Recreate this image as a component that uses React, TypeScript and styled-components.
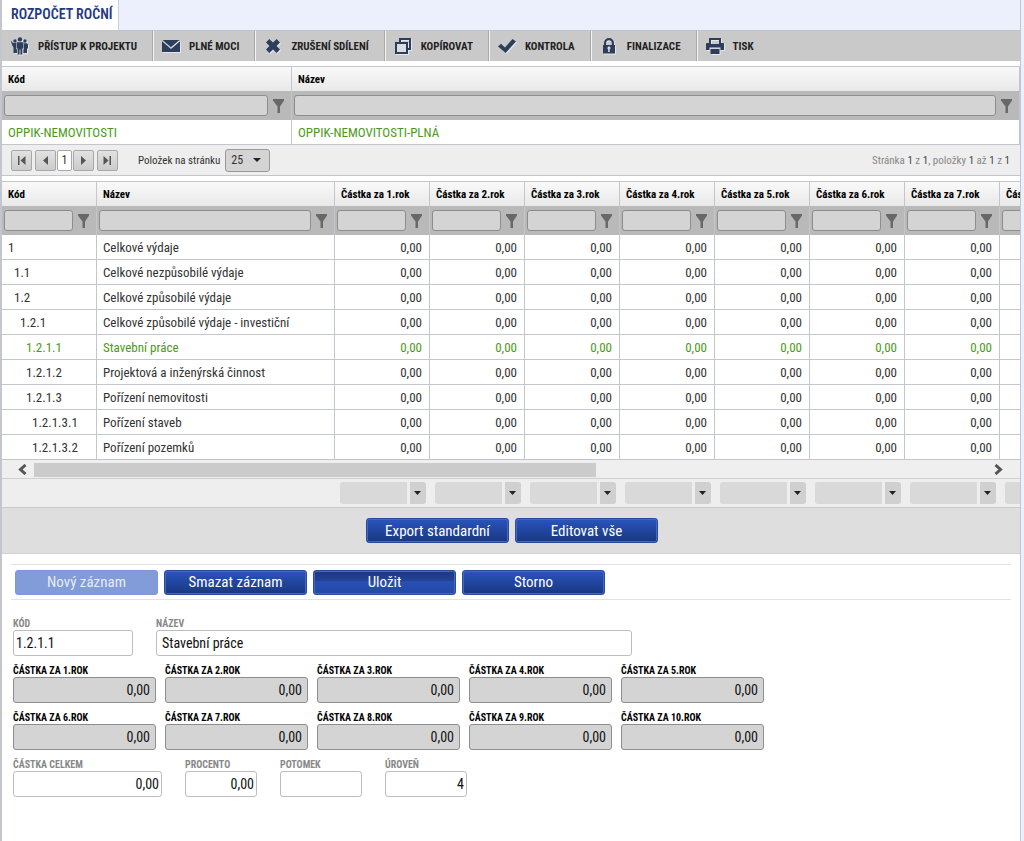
import React from "react";
import styled, { createGlobalStyle, css } from "styled-components";

const GlobalStyle = createGlobalStyle`
  *, *::before, *::after { box-sizing: border-box; }
  body {
    margin: 0;
    background: #ecf0fc;
    color: #333;
    font-family: "Roboto Condensed", "Liberation Sans Narrow", Roboto, sans-serif;
    font-size: 13px;
  }
  button, input, select { font: inherit; color: inherit; margin: 0; }
`;

const Page = styled.div`
  display: flex;
  flex-direction: column;
  min-height: 100vh;
  padding-right: 3px;
`;

const Frame = styled.main`
  flex: 1;
  display: flex;
  flex-direction: column;
  border: solid #c3c6cb;
  border-width: 0 1px 0 2px;
  background: #fff;
  min-width: 0;
`;

const TabStrip = styled.nav`
  display: flex;
  height: 30px;
  background: #ecf0fc;
`;

const Tab = styled.a`
  display: flex;
  align-items: center;
  padding: 0 5px 2px 9px;
  border-right: 1px solid #ccd0da;
  background: #fff;
  color: #1f3a83;
  font-size: 14px;
  font-weight: 600;
  text-decoration: none;
`;

const Toolbar = styled.div`
  display: flex;
  height: 31px;
  padding-left: 1px;
  border-top: 1px solid #bfc3cc;
  background: #c9c9c9;
`;

const Tool = styled.button`
  display: flex;
  align-items: center;
  gap: 8px;
  padding: 0 15px 0 7px;
  border: 0;
  border-right: 1px solid #a9a9a9;
  box-shadow: 1px 0 #f4f4f4;
  margin-right: 1px;
  background: none;
  color: #222;
  font-size: 11px;
  font-weight: 700;
  white-space: nowrap;
  &:last-child {
    border-right: 0;
    box-shadow: none;
  }
`;

const ToolIcon = styled.svg`
  width: 20px;
  height: 18px;
  fill: #2c3e5c;
  filter: drop-shadow(1px 1px 0 #e4e6ea);
`;

const Panel = styled.section`
  margin-top: 5px;
  border-top: 1px solid #c3c6cb;
`;

const GridViewport = styled.div`
  overflow: hidden;
`;

const Grid = styled.table<{ $width?: number }>`
  width: ${(p) => (p.$width ? `${p.$width}px` : "100%")};
  table-layout: fixed;
  border-collapse: separate;
  border-spacing: 0;
`;

const Column = styled.col<{ $width?: number }>`
  width: ${(p) => (p.$width ? `${p.$width}px` : "auto")};
`;

const HeadCell = styled.th`
  height: 24px;
  padding: 0 6px 0 6px;
  border-right: 1px solid #c3c6cb;
  background: linear-gradient(#f9f9f9, #e9e9e9);
  color: #000;
  font-size: 11px;
  font-weight: 700;
  text-align: left;
  white-space: nowrap;
`;

const FilterCell = styled.td`
  height: 29px;
  padding: 0;
  border-right: 1px solid #c3c6cb;
  background: #b9b9b9;
`;

const FilterBox = styled.div`
  display: flex;
  align-items: center;
  gap: 5px;
  padding: 0 7px 0 2px;
`;

const FilterInput = styled.input`
  flex: 1;
  min-width: 0;
  height: 21px;
  padding: 0 4px;
  border: 1px solid #8d8d8d;
  border-radius: 3px;
  background: #d4d4d4;
`;

const FilterButton = styled.button`
  display: flex;
  padding: 0;
  border: 0;
  background: none;
  svg {
    width: 11px;
    height: 14px;
    fill: #686868;
  }
`;

const Cell = styled.td<{ $level?: number; $numeric?: boolean; $active?: boolean }>`
  height: 25px;
  padding: 0 7px 0 ${(p) => 6 + (p.$level ?? 0) * 6}px;
  border: solid #c3c6cb;
  border-width: 0 1px 1px 0;
  color: ${(p) => (p.$active ? "#4c9a1b" : "#333")};
  text-align: ${(p) => (p.$numeric ? "right" : "left")};
  white-space: nowrap;
`;

const Pager = styled.div`
  display: flex;
  align-items: center;
  height: 31px;
  padding: 0 10px 0 9px;
  border-bottom: 1px solid #c3c6cb;
  background: #eeeeee;
  font-size: 11px;
`;

const pagerBox = css`
  display: flex;
  align-items: center;
  justify-content: center;
  height: 21px;
  padding: 0;
  border: 1px solid #a8a8a8;
  border-radius: 2px;
`;

const PagerButton = styled.button`
  ${pagerBox}
  width: 21px;
  background: linear-gradient(#e2e2e2, #cbcbcb);
  svg {
    width: 9px;
    height: 9px;
    fill: #555;
  }
`;

const CurrentPage = styled.button`
  ${pagerBox}
  width: 15px;
  background: #fff;
  font-size: 12px;
`;

const PagerGroup = styled.div<{ $gap: number }>`
  display: flex;
  align-items: center;
  gap: ${(p) => p.$gap}px;
`;

const SizeLabel = styled.label`
  display: flex;
  align-items: center;
  gap: 5px;
  margin-left: 20px;
`;

const SelectWrap = styled.span`
  position: relative;
  display: block;
`;

const SizeSelect = styled.select`
  display: block;
  appearance: none;
  width: 45px;
  height: 23px;
  padding: 0 0 0 5px;
  border: 1px solid #999;
  border-radius: 3px;
  background: #d4d4d4;
  font-size: 12px;
`;

const SelectArrow = styled.svg<{ $right: number; $size: number }>`
  position: absolute;
  top: 50%;
  right: ${(p) => p.$right}px;
  width: ${(p) => p.$size}px;
  height: 4px;
  margin-top: -2px;
  fill: #222;
  pointer-events: none;
`;

const PagerInfo = styled.span`
  margin-left: auto;
  color: #888;
  b {
    color: #444;
    font-weight: 400;
  }
`;

const ScrollBar = styled.div`
  display: flex;
  align-items: center;
  height: 19px;
  padding: 1px 12px 0 10px;
  border-bottom: 1px solid #cfcfcf;
  background: #efefef;
`;

const ScrollArrow = styled.button`
  display: flex;
  justify-content: center;
  width: 20px;
  padding: 0;
  border: 0;
  background: none;
  svg {
    width: 9px;
    height: 11px;
    fill: none;
    stroke: #555;
    stroke-width: 3;
  }
`;

const ScrollTrack = styled.div`
  flex: 1;
  height: 14px;
  margin: 0 2px;
`;

const ScrollThumb = styled.div`
  width: 59%;
  height: 100%;
  background: #cbcbcb;
`;

const Totals = styled.div`
  display: flex;
  overflow: hidden;
  height: 29px;
  align-items: center;
  padding-left: 338px;
  gap: 9px;
  border-bottom: 1px solid #c9c9c9;
  background: #eeeeee;
`;

const TotalSelect = styled.select`
  display: block;
  appearance: none;
  width: 86px;
  height: 22px;
  padding: 0 20px 0 4px;
  border: 0;
  border-radius: 3px;
  background: linear-gradient(90deg, #d9d9d9 67px, #eeeeee 67px, #eeeeee 70px, #d0d0d0 70px);
`;

const ActionBar = styled.div`
  display: flex;
  justify-content: center;
  align-items: center;
  gap: 6px;
  height: 46px;
  padding-left: 2px;
  border-bottom: 1px solid #d2d2d2;
  background: #dedede;
`;

const RecordBar = styled.div`
  display: flex;
  align-items: center;
  gap: 6px;
  height: 36px;
  margin: 10px 9px 0;
  padding-left: 4px;
  border: solid #e3e3e3;
  border-width: 1px 0;
`;

const ActionButton = styled.button<{ $tone?: "pressed" }>`
  width: 143px;
  height: 25px;
  padding: 0;
  border: 1px solid #2a4a9c;
  border-radius: 3px;
  box-shadow: inset 0 0 0 1px #4468bd;
  background: ${(p) =>
    p.$tone === "pressed"
      ? "linear-gradient(#1b3780, #234394 42%, #2750b4 46%, #2348a6)"
      : "linear-gradient(#2a55bd, #193681)"};
  color: #fff;
  font-size: 15px;
  &:disabled {
    border-color: #7e98d6;
    box-shadow: none;
    background: #829bd9;
    color: #e6ecfa;
  }
`;

const RecordForm = styled.form`
  display: flex;
  flex-direction: column;
  gap: 8px;
  padding: 17px 11px 40px;
`;

const FormRow = styled.div<{ $gap: number }>`
  display: flex;
  flex-wrap: wrap;
  gap: 8px ${(p) => p.$gap}px;
`;

const Field = styled.label<{ $width: number; $strong?: boolean }>`
  display: flex;
  flex-direction: column;
  width: ${(p) => p.$width}px;
  color: ${(p) => (p.$strong ? "#000" : "#888")};
  font-size: 10px;
  font-weight: 700;
  line-height: 13px;
`;

const FieldInput = styled.input<{ $numeric?: boolean; $locked?: boolean; $indent?: number }>`
  width: 100%;
  height: 26px;
  padding: 0 ${(p) => (p.$locked ? 5 : 2)}px 0 ${(p) => p.$indent ?? 2}px;
  border: 1px solid ${(p) => (p.$locked ? "#8d8d8d" : "#bdbdbd")};
  border-radius: 3px;
  background: ${(p) => (p.$locked ? "#d4d4d4" : "#fff")};
  color: #111;
  font-size: 14px;
  font-weight: 400;
  text-align: ${(p) => (p.$numeric ? "right" : "left")};
`;

const tools: { label: string; icon: React.ReactNode }[] = [
  {
    label: "PŘÍSTUP K PROJEKTU",
    icon: (
      <>
        <circle cx="10" cy="2.4" r="2.2" />
        <circle cx="5" cy="4" r="1.700" />
        <circle cx="15" cy="4" r="1.700" />
        <path d="M6.600 5.200h6.800v6.300h-1.100V17.500H10.400v-5h-.8v5H7.700v-6H6.600z" />
        <path d="M1.400 3.600L2.900 6h3.200v6.200h1V16H3.500v-5.200L2.400 8.600 1.200 5.500z" />
        <path d="M13.900 6.200h2.800l1.300 1.300v4h-1V16h-3.600v-3.800h.5z" />
      </>
    ),
  },
  {
    label: "PLNÉ MOCI",
    icon: (
      <>
        <path d="M1.500 3h17L10 10.200z" />
        <path d="M1 4.300l9 7.600 9-7.600V15H1z" />
      </>
    ),
  },
  {
    label: "ZRUŠENÍ SDÍLENÍ",
    icon: <path d="M3 5.500L6.300 2 10 5.600 13.700 2 17 5.500 13.600 9l3.400 3.500-3.300 3.500L10 12.400 6.300 16 3 12.500 6.400 9z" />,
  },
  {
    label: "KOPÍROVAT",
    icon: (
      <>
        <path
          fillRule="evenodd"
          d="M6 1h12v12h-3v4H2V5h4zM8 3v2h7v6h1V3zM4 7v8h9V7z"
        />
        <path d="M4 7h9v8H4z" fill="#dcdde0" />
      </>
    ),
  },
  {
    label: "KONTROLA",
    icon: <path d="M1 9.600l3-2.800 4 3.600L15.500 2 19 4.600 8.600 16z" />,
  },
  {
    label: "FINALIZACE",
    icon: (
      <path
        fillRule="evenodd"
        d="M4 8h1V6a5 5 0 0 1 10 0v2h1v8.500H4zM7.200 8h5.600V6a2.800 2.800 0 0 0-5.600 0zM10 9.600a1.500 1.500 0 0 0-.8 2.800V15h1.600v-2.600A1.500 1.500 0 0 0 10 9.600z"
      />
    ),
  },
  {
    label: "TISK",
    icon: (
      <path
        fillRule="evenodd"
        d="M4 1h12v5h2a1 1 0 0 1 1 1v6h-3.500v-2.500h-11V13H1V7a1 1 0 0 1 1-1h2zM6 3v4h8V3zM5.500 12h9v5h-9z"
      />
    ),
  },
];

const years = [1, 2, 3, 4, 5, 6, 7, 8, 9, 10];
const gridYears = years.slice(0, 8);

const budgetRows = [
  { code: "1", level: 0, name: "Celkové výdaje" },
  { code: "1.1", level: 1, name: "Celkové nezpůsobilé výdaje" },
  { code: "1.2", level: 1, name: "Celkové způsobilé výdaje" },
  { code: "1.2.1", level: 2, name: "Celkové způsobilé výdaje - investiční" },
  { code: "1.2.1.1", level: 3, name: "Stavební práce" },
  { code: "1.2.1.2", level: 3, name: "Projektová a inženýrská činnost" },
  { code: "1.2.1.3", level: 3, name: "Pořízení nemovitosti" },
  { code: "1.2.1.3.1", level: 4, name: "Pořízení staveb" },
  { code: "1.2.1.3.2", level: 4, name: "Pořízení pozemků" },
];

const selectedCode = "1.2.1.1";

function Filter({ label }: { label: string }) {
  return (
    <FilterCell>
      <FilterBox>
        <FilterInput aria-label={`Filtr ${label}`} />
        <FilterButton type="button" aria-label={`Filtrovat ${label}`}>
          <svg viewBox="0 0 11 14">
            <path d="M0 0h11v1.500L7 7.500V14H4.500V7.500L0 1.500z" />
          </svg>
        </FilterButton>
      </FilterBox>
    </FilterCell>
  );
}

function Arrow({ right, size }: { right: number; size: number }) {
  return (
    <SelectArrow $right={right} $size={size} viewBox="0 0 8 4" preserveAspectRatio="none">
      <path d="M0 0h8L4 4z" />
    </SelectArrow>
  );
}

function ProjectGrid() {
  return (
    <Panel>
      <Grid>
        <colgroup>
          <Column $width={290} />
          <Column />
        </colgroup>
        <thead>
          <tr>
            <HeadCell>Kód</HeadCell>
            <HeadCell>Název</HeadCell>
          </tr>
        </thead>
        <tbody>
          <tr>
            <Filter label="Kód" />
            <Filter label="Název" />
          </tr>
          <tr>
            <Cell $active>OPPIK-NEMOVITOSTI</Cell>
            <Cell $active>OPPIK-NEMOVITOSTI-PLNÁ</Cell>
          </tr>
        </tbody>
      </Grid>
      <Pager>
        <PagerGroup $gap={3}>
          <PagerButton type="button" aria-label="První stránka">
            <svg viewBox="0 0 9 9"><path d="M1 0h1.500v9H1zM8.500 0v9L3.500 4.500z" /></svg>
          </PagerButton>
          <PagerGroup $gap={1}>
            <PagerButton type="button" aria-label="Předchozí stránka">
              <svg viewBox="0 0 9 9"><path d="M7 0v9L2 4.500z" /></svg>
            </PagerButton>
            <CurrentPage type="button">1</CurrentPage>
            <PagerButton type="button" aria-label="Další stránka">
              <svg viewBox="0 0 9 9"><path d="M2 0v9l5-4.500z" /></svg>
            </PagerButton>
          </PagerGroup>
          <PagerButton type="button" aria-label="Poslední stránka">
            <svg viewBox="0 0 9 9"><path d="M6.500 0H8v9H6.500zM.5 0v9l5-4.500z" /></svg>
          </PagerButton>
        </PagerGroup>
        <SizeLabel>
          Položek na stránku
          <SelectWrap>
            <SizeSelect defaultValue="25">
              <option>25</option>
              <option>50</option>
            </SizeSelect>
            <Arrow right={9} size={8} />
          </SelectWrap>
        </SizeLabel>
        <PagerInfo>
          Stránka <b>1</b> z <b>1</b>, položky <b>1</b> až <b>1</b> z <b>1</b>
        </PagerInfo>
      </Pager>
    </Panel>
  );
}

function BudgetGrid() {
  return (
    <Panel>
      <GridViewport>
        <Grid $width={1093}>
          <colgroup>
            <Column $width={95} />
            <Column $width={238} />
            {gridYears.map((y) => (
              <Column key={y} $width={95} />
            ))}
          </colgroup>
          <thead>
            <tr>
              <HeadCell>Kód</HeadCell>
              <HeadCell>Název</HeadCell>
              {gridYears.map((y) => (
                <HeadCell key={y}>{`Částka za ${y}.rok`}</HeadCell>
              ))}
            </tr>
          </thead>
          <tbody>
            <tr>
              <Filter label="Kód" />
              <Filter label="Název" />
              {gridYears.map((y) => (
                <Filter key={y} label={`Částka za ${y}.rok`} />
              ))}
            </tr>
            {budgetRows.map((row) => {
              const active = row.code === selectedCode;
              return (
                <tr key={row.code}>
                  <Cell $level={row.level} $active={active}>{row.code}</Cell>
                  <Cell $active={active}>{row.name}</Cell>
                  {gridYears.map((y) => (
                    <Cell key={y} $numeric $active={active}>0,00</Cell>
                  ))}
                </tr>
              );
            })}
          </tbody>
        </Grid>
      </GridViewport>
      <ScrollBar>
        <ScrollArrow type="button" aria-label="Posunout vlevo">
          <svg viewBox="0 0 9 11"><path d="M7.500 1L2.500 5.500l5 4.500" /></svg>
        </ScrollArrow>
        <ScrollTrack>
          <ScrollThumb />
        </ScrollTrack>
        <ScrollArrow type="button" aria-label="Posunout vpravo">
          <svg viewBox="0 0 9 11"><path d="M1.500 1l5 4.500-5 4.500" /></svg>
        </ScrollArrow>
      </ScrollBar>
      <Totals>
        {gridYears.map((y) => (
          <SelectWrap key={y}>
            <TotalSelect aria-label={`Souhrn ${y}.rok`} />
            <Arrow right={5} size={7} />
          </SelectWrap>
        ))}
      </Totals>
    </Panel>
  );
}

function YearFields({ from, to }: { from: number; to: number }) {
  return (
    <FormRow $gap={9}>
      {years.slice(from - 1, to).map((y) => (
        <Field key={y} $width={143} $strong>
          {`ČÁSTKA ZA ${y}.ROK`}
          <FieldInput $numeric $locked readOnly defaultValue="0,00" />
        </Field>
      ))}
    </FormRow>
  );
}

export default function App() {
  return (
    <Page>
      <GlobalStyle />
      <Frame>
        <TabStrip>
          <Tab href="#rozpocet">ROZPOČET ROČNÍ</Tab>
        </TabStrip>
        <Toolbar>
          {tools.map((tool) => (
            <Tool key={tool.label} type="button">
              <ToolIcon viewBox="0 0 20 18">{tool.icon}</ToolIcon>
              {tool.label}
            </Tool>
          ))}
        </Toolbar>
        <ProjectGrid />
        <BudgetGrid />
        <ActionBar>
          <ActionButton type="button">Export standardní</ActionButton>
          <ActionButton type="button">Editovat vše</ActionButton>
        </ActionBar>
        <RecordBar>
          <ActionButton type="button" disabled>Nový záznam</ActionButton>
          <ActionButton type="button">Smazat záznam</ActionButton>
          <ActionButton type="submit" form="record" $tone="pressed">Uložit</ActionButton>
          <ActionButton type="reset" form="record">Storno</ActionButton>
        </RecordBar>
        <RecordForm id="record">
          <FormRow $gap={23}>
            <Field $width={120}>
              KÓD
              <FieldInput readOnly defaultValue="1.2.1.1" />
            </Field>
            <Field $width={476}>
              NÁZEV
              <FieldInput $indent={5} defaultValue="Stavební práce" />
            </Field>
          </FormRow>
          <YearFields from={1} to={5} />
          <YearFields from={6} to={10} />
          <FormRow $gap={23}>
            <Field $width={149}>
              ČÁSTKA CELKEM
              <FieldInput $numeric readOnly defaultValue="0,00" />
            </Field>
            <Field $width={72}>
              PROCENTO
              <FieldInput $numeric readOnly defaultValue="0,00" />
            </Field>
            <Field $width={82}>
              POTOMEK
              <FieldInput readOnly />
            </Field>
            <Field $width={82}>
              ÚROVEŇ
              <FieldInput $numeric readOnly defaultValue="4" />
            </Field>
          </FormRow>
        </RecordForm>
      </Frame>
    </Page>
  );
}
